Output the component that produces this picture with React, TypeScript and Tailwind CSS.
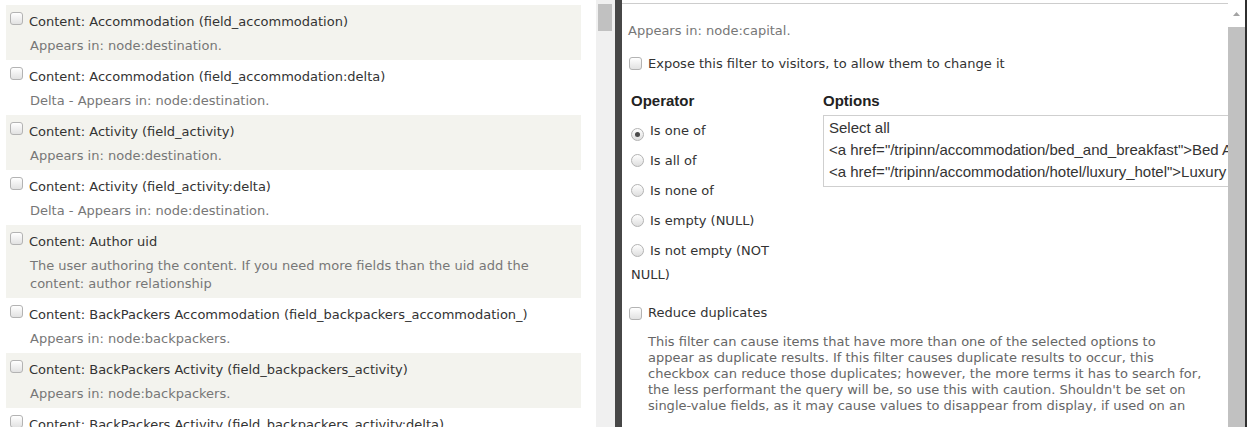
const fields = [
  { label: "Content: Accommodation (field_accommodation)", help: "Appears in: node:destination." },
  { label: "Content: Accommodation (field_accommodation:delta)", help: "Delta - Appears in: node:destination." },
  { label: "Content: Activity (field_activity)", help: "Appears in: node:destination." },
  { label: "Content: Activity (field_activity:delta)", help: "Delta - Appears in: node:destination." },
  {
    label: "Content: Author uid",
    help: "The user authoring the content. If you need more fields than the uid add the content: author relationship",
  },
  { label: "Content: BackPackers Accommodation (field_backpackers_accommodation_)", help: "Appears in: node:backpackers." },
  { label: "Content: BackPackers Activity (field_backpackers_activity)", help: "Appears in: node:backpackers." },
  { label: "Content: BackPackers Activity (field_backpackers_activity:delta)", help: "Delta - Appears in: node:backpackers." },
]

const operators = ["Is one of", "Is all of", "Is none of", "Is empty (NULL)", "Is not empty (NOT NULL)"]

const options = [
  "Select all",
  '<a href="/tripinn/accommodation/bed_and_breakfast">Bed And Breakfast</a>',
  '<a href="/tripinn/accommodation/hotel/luxury_hotel">Luxury Hotel</a>',
]

// help text under "Reduce duplicates", broken the way the form wraps it
const reduceHelp = [
  "This filter can cause items that have more than one of the selected options to",
  "appear as duplicate results. If this filter causes duplicate results to occur, this",
  "checkbox can reduce those duplicates; however, the more terms it has to search for,",
  "the less performant the query will be, so use this with caution. Shouldn't be set on",
  "single-value fields, as it may cause values to disappear from display, if used on an",
  "incompatible field.",
]

const Checkbox = () => (
  <span className="inline-block w-[13px] h-[13px] shrink-0 rounded-[3px] border border-[#b3b3b3] bg-linear-to-b from-white to-[#e2e2e2]" />
)

const Radio = ({ checked }: { checked?: boolean }) => (
  <span className="inline-flex items-center justify-center align-[-2px] w-[13px] h-[13px] mr-[6px] rounded-full border border-[#b3b3b3] bg-linear-to-b from-white to-[#dedede]">
    {checked && <span className="w-[5px] h-[5px] rounded-full bg-[#4a4a4a]" />}
  </span>
)

export default function App() {
  return (
    <div className="flex h-[427px] w-[1247px] overflow-hidden bg-white font-['DejaVu_Sans',sans-serif] text-[13px]">
      {/* field list */}
      <div className="w-[596px] shrink-0 pt-[5px] pl-[6px] pr-[15px]">
        {fields.map((f, i) => (
          <div
            key={f.label}
            className={`flex gap-[6px] pl-[4px] pr-[6px] pt-[7px] pb-[5px] ${i % 2 === 0 ? "bg-[#f3f3ee]" : "bg-white"}`}
          >
            <Checkbox />
            <div className="min-w-0">
              <div className="mt-[1px] leading-[18px] text-[#333]">{f.label}</div>
              <div className="mt-[6px] pl-[1px] leading-[18px] text-[#777]">{f.help}</div>
            </div>
          </div>
        ))}
      </div>

      {/* list scrollbar */}
      <div className="w-[19px] shrink-0 bg-[#f0f0f0] pt-[4px] pl-[2px]">
        <div className="w-[14px] h-[27px] bg-[#c1c1c1]" />
      </div>
      <div className="w-[7px] shrink-0 bg-[#474747]" />

      {/* filter settings */}
      <div className="flex-1 min-w-0 flex">
        <div className="flex-1 min-w-0 pt-[3px]">
          <div className="h-[411px] overflow-hidden border-t border-[#cdcdcd] pl-[6px] pt-[18px]">
            <div className="leading-[18px] text-[#777]">Appears in: node:capital.</div>

            <div className="mt-[15px] flex gap-[6px] pl-[1px]">
              <span className="mt-[1px]">
                <Checkbox />
              </span>
              <span className="leading-[18px] text-[#333]">Expose this filter to visitors, to allow them to change it</span>
            </div>

            <div className="mt-[15px] flex">
              <div className="w-[195px] shrink-0 pl-[3px]">
                <div className="font-['Liberation_Sans',sans-serif] text-[15px] font-bold leading-[20px] text-[#222]">
                  Operator
                </div>
                <div className="mt-[8px] w-[160px] flex flex-col gap-[6px] text-[#333]">
                  {operators.map((op, i) => (
                    <div key={op} className="leading-[24px]">
                      <Radio checked={i === 0} />
                      {op}
                    </div>
                  ))}
                </div>
              </div>
              <div className="min-w-0 flex-1">
                <div className="font-['Liberation_Sans',sans-serif] text-[15px] font-bold leading-[20px] text-[#222]">
                  Options
                </div>
                <div className="mt-[4px] w-[480px] h-[72px] border border-[#cfcfcf] pt-[1px] pl-[5px] font-['Liberation_Sans',sans-serif] text-[15px] leading-[22px] text-[#333] whitespace-nowrap overflow-hidden">
                  {options.map((o) => (
                    <div key={o}>{o}</div>
                  ))}
                </div>
              </div>
            </div>

            <div className="mt-[17px] flex gap-[6px] pl-[1px]">
              <span className="mt-[2px]">
                <Checkbox />
              </span>
              <span className="leading-[18px] text-[#333]">Reduce duplicates</span>
            </div>
            <div className="mt-[9px] ml-[20px] leading-[16px] text-[#666] whitespace-nowrap">
              {reduceHelp.map((line) => (
                <div key={line}>{line}</div>
              ))}
            </div>
          </div>
        </div>

        {/* dialog scrollbar */}
        <div className="w-[17px] shrink-0 flex flex-col bg-[#f0f0f0]">
          <div className="h-[27px] flex items-center justify-center bg-white">
            <svg width="7" height="4" viewBox="0 0 7 4">
              <path d="M0 4 L3.5 0 L7 4 Z" fill="#a3a3a3" />
            </svg>
          </div>
          <div className="flex-1 bg-[#c1c1c1]" />
        </div>
      </div>
      <div className="w-[2px] shrink-0 bg-[#2f2f2f]" />
    </div>
  )
}
